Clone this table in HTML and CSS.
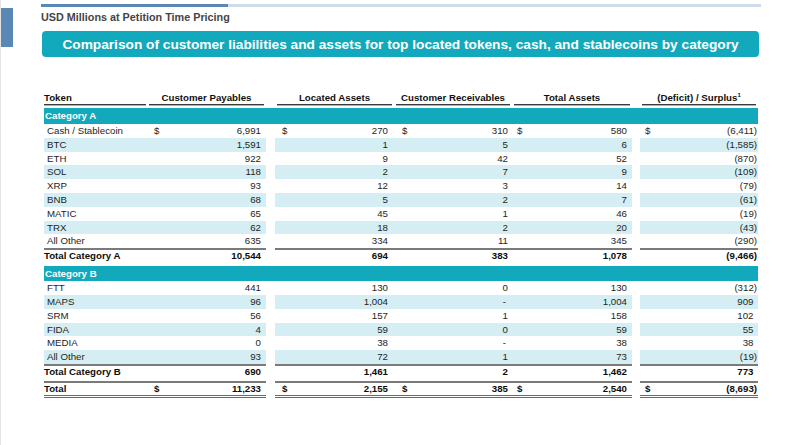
FILE: index.html
```html
<!DOCTYPE html>
<html lang="en">
<head>
<meta charset="utf-8">
<title>Comparison of customer liabilities and assets</title>
<link rel="stylesheet" href="styles.css">
</head>
<body>
<div class="page">
  <div class="side-mark"></div>
  <main class="main">
    <div class="topbar"><span class="topbar-dark"></span><span class="topbar-light"></span></div>
    <div class="subtitle">USD Millions at Petition Time Pricing</div>
    <div class="banner">Comparison of customer liabilities and assets for top located tokens, cash, and stablecoins by category</div>

    <div class="table">
      <div class="row head">
        <div class="c tok"><span class="hl hl-left">Token</span></div>
        <div class="c pay"><span class="hl">Customer Payables</span></div>
        <div class="gap"></div>
        <div class="c loc"><span class="hl">Located Assets</span></div>
        <div class="c rec"><span class="hl">Customer Receivables</span></div>
        <div class="c tot"><span class="hl">Total Assets</span></div>
        <div class="gap"></div>
        <div class="c def"><span class="hl">(Deficit) / Surplus<sup>1</sup></span></div>
      </div>

      <div class="row cat"><div class="cat-cell">Category A</div></div>

      <div class="row">
        <div class="c tok">Cash / Stablecoin</div>
        <div class="c n pay"><span>$</span><span>6,991</span></div>
        <div class="gap"></div>
        <div class="c n loc"><span>$</span><span>270</span></div>
        <div class="c n rec"><span>$</span><span>310</span></div>
        <div class="c n tot"><span>$</span><span>580</span></div>
        <div class="gap"></div>
        <div class="c n def"><span>$</span><span>(6,411)</span></div>
      </div>
      <div class="row alt">
        <div class="c tok">BTC</div>
        <div class="c n pay"><span>1,591</span></div>
        <div class="gap"></div>
        <div class="c n loc"><span>1</span></div>
        <div class="c n rec"><span>5</span></div>
        <div class="c n tot"><span>6</span></div>
        <div class="gap"></div>
        <div class="c n def"><span>(1,585)</span></div>
      </div>
      <div class="row">
        <div class="c tok">ETH</div>
        <div class="c n pay"><span>922</span></div>
        <div class="gap"></div>
        <div class="c n loc"><span>9</span></div>
        <div class="c n rec"><span>42</span></div>
        <div class="c n tot"><span>52</span></div>
        <div class="gap"></div>
        <div class="c n def"><span>(870)</span></div>
      </div>
      <div class="row alt">
        <div class="c tok">SOL</div>
        <div class="c n pay"><span>118</span></div>
        <div class="gap"></div>
        <div class="c n loc"><span>2</span></div>
        <div class="c n rec"><span>7</span></div>
        <div class="c n tot"><span>9</span></div>
        <div class="gap"></div>
        <div class="c n def"><span>(109)</span></div>
      </div>
      <div class="row">
        <div class="c tok">XRP</div>
        <div class="c n pay"><span>93</span></div>
        <div class="gap"></div>
        <div class="c n loc"><span>12</span></div>
        <div class="c n rec"><span>3</span></div>
        <div class="c n tot"><span>14</span></div>
        <div class="gap"></div>
        <div class="c n def"><span>(79)</span></div>
      </div>
      <div class="row alt">
        <div class="c tok">BNB</div>
        <div class="c n pay"><span>68</span></div>
        <div class="gap"></div>
        <div class="c n loc"><span>5</span></div>
        <div class="c n rec"><span>2</span></div>
        <div class="c n tot"><span>7</span></div>
        <div class="gap"></div>
        <div class="c n def"><span>(61)</span></div>
      </div>
      <div class="row">
        <div class="c tok">MATIC</div>
        <div class="c n pay"><span>65</span></div>
        <div class="gap"></div>
        <div class="c n loc"><span>45</span></div>
        <div class="c n rec"><span>1</span></div>
        <div class="c n tot"><span>46</span></div>
        <div class="gap"></div>
        <div class="c n def"><span>(19)</span></div>
      </div>
      <div class="row alt">
        <div class="c tok">TRX</div>
        <div class="c n pay"><span>62</span></div>
        <div class="gap"></div>
        <div class="c n loc"><span>18</span></div>
        <div class="c n rec"><span>2</span></div>
        <div class="c n tot"><span>20</span></div>
        <div class="gap"></div>
        <div class="c n def"><span>(43)</span></div>
      </div>
      <div class="row">
        <div class="c tok">All Other</div>
        <div class="c n pay"><span>635</span></div>
        <div class="gap"></div>
        <div class="c n loc"><span>334</span></div>
        <div class="c n rec"><span>11</span></div>
        <div class="c n tot"><span>345</span></div>
        <div class="gap"></div>
        <div class="c n def"><span>(290)</span></div>
      </div>
      <div class="row total sub-a">
        <div class="c tok">Total Category A</div>
        <div class="c n pay"><span>10,544</span></div>
        <div class="gap"></div>
        <div class="c n loc"><span>694</span></div>
        <div class="c n rec"><span>383</span></div>
        <div class="c n tot"><span>1,078</span></div>
        <div class="gap"></div>
        <div class="c n def"><span>(9,466)</span></div>
      </div>

      <div class="row cat cat-b"><div class="cat-cell">Category B</div></div>

      <div class="row">
        <div class="c tok">FTT</div>
        <div class="c n pay"><span>441</span></div>
        <div class="gap"></div>
        <div class="c n loc"><span>130</span></div>
        <div class="c n rec"><span>0</span></div>
        <div class="c n tot"><span>130</span></div>
        <div class="gap"></div>
        <div class="c n def"><span>(312)</span></div>
      </div>
      <div class="row alt">
        <div class="c tok">MAPS</div>
        <div class="c n pay"><span>96</span></div>
        <div class="gap"></div>
        <div class="c n loc"><span>1,004</span></div>
        <div class="c n rec"><span class="dash">-</span></div>
        <div class="c n tot"><span>1,004</span></div>
        <div class="gap"></div>
        <div class="c n def"><span class="pos">909</span></div>
      </div>
      <div class="row">
        <div class="c tok">SRM</div>
        <div class="c n pay"><span>56</span></div>
        <div class="gap"></div>
        <div class="c n loc"><span>157</span></div>
        <div class="c n rec"><span>1</span></div>
        <div class="c n tot"><span>158</span></div>
        <div class="gap"></div>
        <div class="c n def"><span class="pos">102</span></div>
      </div>
      <div class="row alt">
        <div class="c tok">FIDA</div>
        <div class="c n pay"><span>4</span></div>
        <div class="gap"></div>
        <div class="c n loc"><span>59</span></div>
        <div class="c n rec"><span>0</span></div>
        <div class="c n tot"><span>59</span></div>
        <div class="gap"></div>
        <div class="c n def"><span class="pos">55</span></div>
      </div>
      <div class="row">
        <div class="c tok">MEDIA</div>
        <div class="c n pay"><span>0</span></div>
        <div class="gap"></div>
        <div class="c n loc"><span>38</span></div>
        <div class="c n rec"><span class="dash">-</span></div>
        <div class="c n tot"><span>38</span></div>
        <div class="gap"></div>
        <div class="c n def"><span class="pos">38</span></div>
      </div>
      <div class="row alt">
        <div class="c tok">All Other</div>
        <div class="c n pay"><span>93</span></div>
        <div class="gap"></div>
        <div class="c n loc"><span>72</span></div>
        <div class="c n rec"><span>1</span></div>
        <div class="c n tot"><span>73</span></div>
        <div class="gap"></div>
        <div class="c n def"><span>(19)</span></div>
      </div>
      <div class="row total">
        <div class="c tok">Total Category B</div>
        <div class="c n pay"><span>690</span></div>
        <div class="gap"></div>
        <div class="c n loc"><span>1,461</span></div>
        <div class="c n rec"><span>2</span></div>
        <div class="c n tot"><span>1,462</span></div>
        <div class="gap"></div>
        <div class="c n def"><span class="pos">773</span></div>
      </div>

      <div class="row total grand">
        <div class="c tok">Total</div>
        <div class="c n pay"><span>$</span><span>11,233</span></div>
        <div class="gap"></div>
        <div class="c n loc"><span>$</span><span>2,155</span></div>
        <div class="c n rec"><span>$</span><span>385</span></div>
        <div class="c n tot"><span>$</span><span>2,540</span></div>
        <div class="gap"></div>
        <div class="c n def"><span>$</span><span>(8,693)</span></div>
      </div>
    </div>
  </main>
</div>
</body>
</html>
```

FILE: styles.css
```css
* {
  box-sizing: border-box;
}

html,
body {
  margin: 0;
  padding: 0;
  background: #ffffff;
}

body {
  width: 800px;
  height: 445px;
  overflow: hidden;
  font-family: "Liberation Sans", Arial, Helvetica, sans-serif;
  color: #1e1e1e;
}

.page {
  display: flex;
  align-items: flex-start;
  height: 445px;
  border-left: 1px solid #e3e3e3;
}

.side-mark {
  flex: none;
  width: 12px;
  height: 39px;
  margin-top: 8px;
  background: #5b87b5;
}

.main {
  margin-left: 28px;
  width: 720px;
}

.topbar {
  display: flex;
  height: 3px;
  margin-top: 4px;
}

.topbar-dark {
  width: 187px;
  background: #5b87b5;
}

.topbar-light {
  flex: 1;
  background: #cfdbe8;
}

.subtitle {
  margin-top: 4px;
  font-size: 10.8px;
  line-height: 13px;
  font-weight: bold;
  color: #454545;
}

.banner {
  margin-top: 7px;
  margin-left: 1px;
  width: 717px;
  height: 26px;
  display: flex;
  align-items: center;
  justify-content: center;
  background: #12a9bc;
  border-radius: 4px;
  color: #ffffff;
  font-weight: bold;
  font-size: 13.7px;
}

.table {
  margin-top: 35px;
  margin-left: 3px;
  width: 714px;
  font-size: 9.7px;
}

.row {
  display: grid;
  grid-template-columns: 103px 119px 9px 119px 118px 120px 8px 118px;
  height: 13.8px;
  line-height: 13.8px;
}

.c {
  white-space: nowrap;
}

.tok {
  padding-left: 3px;
}

.n {
  display: flex;
  justify-content: space-between;
}

.n span:last-child {
  margin-left: auto;
}

.pay { padding: 0 5px 0 7px; }
.loc { padding: 0 6px 0 7px; }
.rec { padding: 0 4px 0 8px; }
.tot { padding: 0 5px 0 5px; }
.def { padding: 0 1px 0 5px; }

.pos {
  padding-right: 3.5px;
}

.dash {
  padding-right: 2px;
}

.row.alt .c {
  background: #d4eef4;
}

/* Header */
.row.head {
  height: 13px;
  line-height: 12px;
  margin-bottom: 3px;
  font-weight: bold;
  color: #111111;
}

.row.head .c {
  padding: 0;
}

.hl {
  display: block;
  margin: 0 2px;
  text-align: center;
  border-bottom: 1px solid #3a3a3a;
  box-shadow: 0 1px 0 #b0b0b0;
}

.hl-left {
  margin: 0 1px 0 0;
  text-align: left;
}

.hl sup {
  font-size: 6px;
  line-height: 0;
  vertical-align: 4px;
}

/* Category bands */
.row.cat {
  height: 16px;
  line-height: 16px;
}

.row.cat-b {
  height: 15px;
  line-height: 15px;
}

.cat-cell {
  grid-column: 1 / -1;
  background: #12a9bc;
  color: #ffffff;
  font-weight: bold;
  padding-left: 1px;
}

/* Totals */
.row.total {
  height: 14px;
  line-height: 12px;
  font-weight: bold;
  color: #0d0d0d;
}

.row.total .c {
  border-top: 2px solid #7a7a7a;
}

.row.total .tok {
  padding-left: 0;
}

.row.sub-a {
  margin-bottom: 4px;
}

.row.grand {
  margin-top: 3px;
  height: 17px;
}

.row.grand .c {
  border-bottom: 3px double #6a6a6a;
}
```
